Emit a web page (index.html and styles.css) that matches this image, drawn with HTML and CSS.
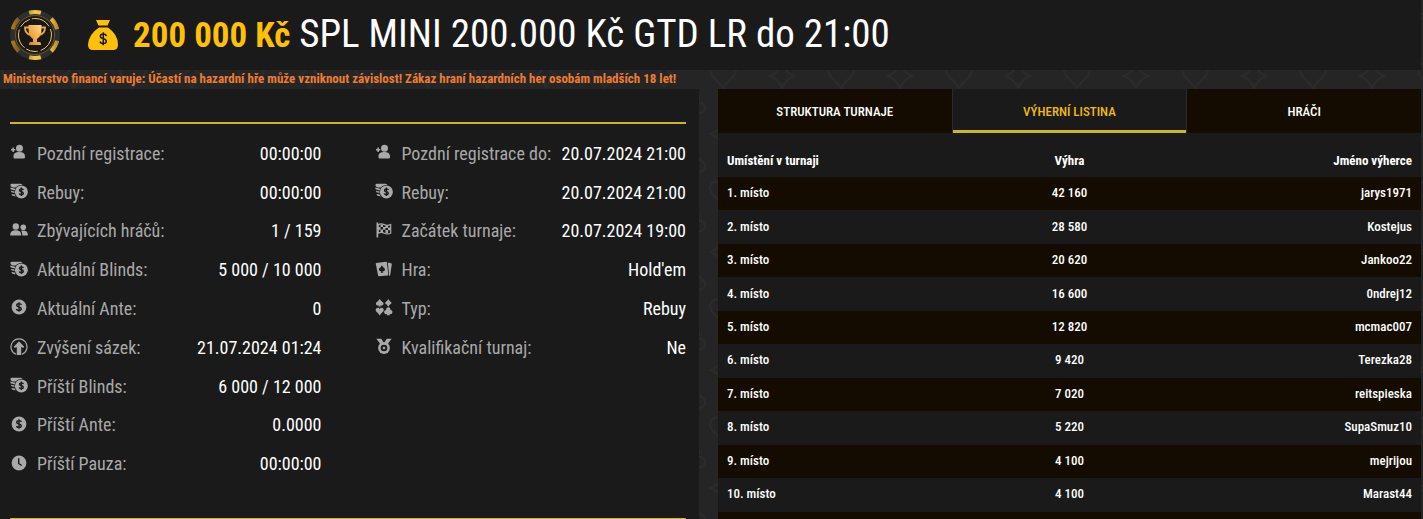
FILE: index.html
```html
<!DOCTYPE html>
<html lang="cs">

<head>
    <meta charset="UTF-8">
    <meta name="viewport" content="width=device-width, initial-scale=1.0">
    <title>SPL MINI 200.000 Kč GTD</title>
    <link rel="stylesheet" href="styles.css">
</head>

<body>
    <svg class="sprite" aria-hidden="true">
        <symbol id="i-user" viewBox="0 0 18 18">
            <circle cx="9.500" cy="4.300" r="3.500"/>
            <path d="M3.500 13.200v-1.200c0-2.500 2.400-3.900 5.900-3.900s5.600 1.400 5.600 3.900v1.200q0 1.300-1.300 1.300H4.800q-1.300 0-1.300-1.300zM2.400 3.600h1.500v1.500h1.400v1.400H3.900V8H2.400V6.500H1V5.100h1.400z"/>
        </symbol>
        <symbol id="i-coins" viewBox="0 0 18 18">
            <path d="M1.800.8h8.400q1.500 0 2.400 1Q8 1.800 5.800 4.600H2.600Q.4 3.800.4 2.100.4.800 1.800.8zM.2 4.600l5 1.200-.6 1.700L.6 6.300zM.8 7.700l3.700.8v1.600L1.500 9.300zM1.500 10.900l3.300.7.8 1.800-3.600-1z"/>
            <circle cx="11.400" cy="8.900" r="6.500"/>
            <path class="cut" d="M13.500 7.100q-.5-1.200-2.100-1.200-1.900 0-1.900 1.400 0 1.100 1.900 1.500t1.900 1.500q0 1.500-1.900 1.500-1.700 0-2.200-1.200M11.400 4.600v8.500"/>
        </symbol>
        <symbol id="i-users" viewBox="0 0 18 18">
            <circle cx="5.800" cy="4.500" r="3.200"/>
            <path d="M.3 13.600v-1.400c0-2.600 2.300-3.900 5.400-3.900s5.400 1.300 5.400 3.900v1.400z"/>
            <circle cx="13.300" cy="5.200" r="2.800"/>
            <path d="M12.200 13.600v-1.500q0-1.900-1.200-3.300 1-.4 2.300-.4c2.700 0 4.500 1.400 4.500 3.900v1.300z"/>
        </symbol>
        <symbol id="i-dollar" viewBox="0 0 18 18">
            <circle cx="9" cy="8" r="7.400"/>
            <path class="cut" d="M11.500 5.900q-.6-1.300-2.500-1.300-2.300 0-2.300 1.700 0 1.200 2.300 1.700t2.300 1.800q0 1.700-2.300 1.700-2.100 0-2.600-1.400M9 3.200v9.600"/>
        </symbol>
        <symbol id="i-raise" viewBox="0 0 18 18">
            <path class="line" d="M6.200 16.300a8 8 0 1 1 5.600 0"/>
            <path d="M9 3.300l5 5.200q.3 1.300-1.200 1.200L11.200 9v8H6.800V9l-1.600.7Q3.700 9.800 4 8.500z"/>
        </symbol>
        <symbol id="i-clock" viewBox="0 0 18 18">
            <circle cx="9" cy="8" r="7.400"/>
            <path class="cut" d="M8.700 3.200V8.500l3 2"/>
        </symbol>
        <symbol id="i-flag" viewBox="0 0 18 18">
            <path d="M1.500.5h1.700v15H1.500z"/>
            <path class="line" d="M3.200 2.600q3-1.500 6 0t6.500 0v8.600q-3.400 1.500-6.500 0t-6 0z"/>
            <path d="M5.500 2.500H8v2.600H5.500zM10.500 3.400H13V6h-2.500zM8 5H10.500v2.800H8zM13 5.600h2.500v2.600H13zM3.300 5h2.200v2.700H3.300zM5.500 7.600H8v2.600H5.500zM10.500 8H13v3h-2.500z"/>
        </symbol>
        <symbol id="i-cards" viewBox="0 0 18 18">
            <path d="M1.300 2L11 .8q.8 0 .9.800l1.400 12q0 .8-.8.900L4 15.300q-.8 0-.9-.8L.8 3q-.2-.8.500-1zM12.800 1.600l3.200.6q.9.200.8 1L15.200 14q-.3 1-1 .9z"/>
            <path class="hole" d="M6.900 4.200q.8 1.900 3 3.500.6 2.200-1.500 2.500l-.8-.3.7 1.800H5.700l.6-1.700-.8.300Q3.600 9.700 3.900 7.700q2.400-1.600 3-3.500z"/>
        </symbol>
        <symbol id="i-suits" viewBox="0 0 18 18">
            <path d="M4.700 0q1 1.800 3.400 3.400 1.200 2.200-1 3-1 .2-1.700-.5L6 7.500H3.400L4 5.900q-.7.700-1.700.5-2.200-.8-1-3Q3.700 1.800 4.700 0zM13.300 0q1.100 2.300 3.500 3.900-2.400 1.600-3.500 3.900-1.100-2.300-3.500-3.900Q12.200 2.300 13.300 0zM4.700 16.500Q3.600 14.400 1.200 12.600q-1.400-2.500.7-3.700 1.800-.6 2.800 1 1-1.600 2.800-1 2.100 1.200.7 3.700-2.400 1.800-3.500 3.900z"/>
            <circle cx="13.300" cy="10.500" r="2.200"/>
            <circle cx="11.300" cy="13.100" r="2.200"/>
            <circle cx="15.300" cy="13.100" r="2.200"/>
            <path d="M12.800 11h1l1 5.300h-3z"/>
        </symbol>
        <symbol id="i-medal" viewBox="0 0 18 18">
            <path d="M1.300.8h5L8.500 4.300l-3 2zM16.700.8h-5L9.500 4.300l3 2z"/>
            <circle cx="9" cy="10" r="5.900"/>
            <circle class="hole" cx="9" cy="10" r="3.300"/>
            <circle cx="9" cy="10" r="1.300"/>
        </symbol>
    </svg>

    <header class="header">
        <svg class="chip" viewBox="0 0 52 52" aria-hidden="true">
            <defs>
                <linearGradient id="gold" x1="0" y1="1" x2="1" y2="0">
                    <stop offset="0" stop-color="#c98a28"/>
                    <stop offset=".5" stop-color="#f3b04c"/>
                    <stop offset="1" stop-color="#ffd98a"/>
                </linearGradient>
                <linearGradient id="rim" x1="0" y1="0" x2="1" y2="0">
                    <stop offset="0" stop-color="#a87a22"/>
                    <stop offset=".15" stop-color="#7d5a1c"/>
                    <stop offset=".5" stop-color="#f0c850"/>
                    <stop offset=".85" stop-color="#e8b83c"/>
                    <stop offset="1" stop-color="#b8862a"/>
                </linearGradient>
            </defs>
            <circle cx="26" cy="26" r="25" fill="#2e2e2e"/>
            <path d="M26 3a23 23 0 0 1 0 46a23 23 0 0 1 0-46" pathLength="60" fill="none" stroke="url(#rim)" stroke-width="4" stroke-dasharray="5 5" stroke-dashoffset="2.500"/>
            <circle cx="26" cy="26" r="19.500" fill="#1d1c1b" stroke="#6b5730"/>
            <circle cx="26" cy="26" r="16.500" fill="#191817" stroke="#e9c86e" stroke-dasharray="20 3 12 2"/>
            <path d="M19.500 16h13v4.500q0 7-4.500 9.500v3h2.500q1.500 0 1.500 3H20q0-3 1.500-3H24v-3q-4.500-2.500-4.500-9.500z" fill="url(#gold)"/>
            <path d="M20 18.500h-4q0 6.500 6 7.500M32 18.500h4q0 6.500-6 7.500" fill="none" stroke="#e8a94a" stroke-width="1.800"/>
        </svg>
        <svg class="bag" viewBox="0 0 32 32" aria-hidden="true">
            <path d="M9 1h14l-2.500 5.500h-9zM12 8.500h9q10 7 10 17 0 5.500-5 5.500H6q-5 0-5-5.500Q2 15 12 8.500z" fill="#ffc107"/>
            <path d="M19.500 17q-.8-2-3.200-2-3 0-3 2.300 0 1.800 3 2.400t3 2.500q0 2.300-3 2.300-2.600 0-3.300-2.100M16.300 13.300v13" fill="none" stroke="#1a1a1a" stroke-width="1.500"/>
        </svg>
        <h1 class="title"><strong class="prize">200 000 Kč</strong> SPL MINI 200.000 Kč GTD LR do 21:00</h1>
    </header>

    <p class="warning">Ministerstvo financí varuje: Účastí na hazardní hře může vzniknout závislost! Zákaz hraní hazardních her osobám mladších 18 let!</p>

    <main class="content">
        <section class="panel info">
            <div class="lists">
                <dl class="list">
                    <div class="item"><svg class="icon"><use href="#i-user"/></svg><dt>Pozdní registrace:</dt><dd>00:00:00</dd></div>
                    <div class="item"><svg class="icon"><use href="#i-coins"/></svg><dt>Rebuy:</dt><dd>00:00:00</dd></div>
                    <div class="item"><svg class="icon"><use href="#i-users"/></svg><dt>Zbývajících hráčů:</dt><dd>1 / 159</dd></div>
                    <div class="item"><svg class="icon"><use href="#i-coins"/></svg><dt>Aktuální Blinds:</dt><dd>5 000 / 10 000</dd></div>
                    <div class="item"><svg class="icon"><use href="#i-dollar"/></svg><dt>Aktuální Ante:</dt><dd>0</dd></div>
                    <div class="item"><svg class="icon"><use href="#i-raise"/></svg><dt>Zvýšení sázek:</dt><dd>21.07.2024 01:24</dd></div>
                    <div class="item"><svg class="icon"><use href="#i-coins"/></svg><dt>Příští Blinds:</dt><dd>6 000 / 12 000</dd></div>
                    <div class="item"><svg class="icon"><use href="#i-dollar"/></svg><dt>Příští Ante:</dt><dd>0.0000</dd></div>
                    <div class="item"><svg class="icon"><use href="#i-clock"/></svg><dt>Příští Pauza:</dt><dd>00:00:00</dd></div>
                </dl>
                <dl class="list">
                    <div class="item"><svg class="icon"><use href="#i-user"/></svg><dt>Pozdní registrace do:</dt><dd>20.07.2024 21:00</dd></div>
                    <div class="item"><svg class="icon"><use href="#i-coins"/></svg><dt>Rebuy:</dt><dd>20.07.2024 21:00</dd></div>
                    <div class="item"><svg class="icon"><use href="#i-flag"/></svg><dt>Začátek turnaje:</dt><dd>20.07.2024 19:00</dd></div>
                    <div class="item"><svg class="icon"><use href="#i-cards"/></svg><dt>Hra:</dt><dd>Hold'em</dd></div>
                    <div class="item"><svg class="icon"><use href="#i-suits"/></svg><dt>Typ:</dt><dd>Rebuy</dd></div>
                    <div class="item"><svg class="icon"><use href="#i-medal"/></svg><dt>Kvalifikační turnaj:</dt><dd>Ne</dd></div>
                </dl>
            </div>
        </section>

        <section class="panel">
            <div class="tabs" role="tablist">
                <button class="tab" type="button" role="tab">STRUKTURA TURNAJE</button>
                <button class="tab active" type="button" role="tab" aria-selected="true">VÝHERNÍ LISTINA</button>
                <button class="tab" type="button" role="tab">HRÁČI</button>
            </div>
            <table class="winners">
                <thead>
                    <tr><th>Umístění v turnaji</th><th>Výhra</th><th>Jméno výherce</th></tr>
                </thead>
                <tbody>
                    <tr><td>1. místo</td><td>42 160</td><td>jarys1971</td></tr>
                    <tr><td>2. místo</td><td>28 580</td><td>Kostejus</td></tr>
                    <tr><td>3. místo</td><td>20 620</td><td>Jankoo22</td></tr>
                    <tr><td>4. místo</td><td>16 600</td><td>0ndrej12</td></tr>
                    <tr><td>5. místo</td><td>12 820</td><td>mcmac007</td></tr>
                    <tr><td>6. místo</td><td>9 420</td><td>Terezka28</td></tr>
                    <tr><td>7. místo</td><td>7 020</td><td>reitspieska</td></tr>
                    <tr><td>8. místo</td><td>5 220</td><td>SupaSmuz10</td></tr>
                    <tr><td>9. místo</td><td>4 100</td><td>mejrijou</td></tr>
                    <tr><td>10. místo</td><td>4 100</td><td>Marast44</td></tr>
                    <tr><td></td><td></td><td></td></tr>
                </tbody>
            </table>
        </section>
    </main>
</body>

</html>
```
FILE: styles.css
```css
* {
    box-sizing: border-box;
}

body {
    margin: 0;
    padding-right: 2px;
    font-family: "Roboto Condensed", "Liberation Sans Narrow", Roboto, sans-serif;
    color: #fff;
    background-color: #252525;
    background-image: url("data:image/svg+xml,%3Csvg xmlns='http://www.w3.org/2000/svg' width='118' height='118' fill='none' stroke='%232b2b2b' stroke-width='2'%3E%3Cpath d='M15 88Q12 83 5 77C-1 70 4 62 10 64Q14 65 15 69Q16 65 20 64C26 62 31 70 25 77Q18 83 15 88z'/%3E%3Cpath d='M74 29Q71 24 64 18C58 11 63 3 69 5Q73 6 74 10Q75 6 79 5C85 3 90 11 84 18Q77 24 74 29zM74 64Q77 72 86 76Q77 80 74 88Q71 80 62 76Q71 72 74 64zM15 4Q18 12 27 16Q18 20 15 28Q12 20 3 16Q12 12 15 4zM104 34Q107 40 113 44C119 50 112 56 105 53L107 58H101L103 53C96 56 89 50 95 44Q101 40 104 34zM45 94Q48 100 54 104C60 110 53 116 46 113L48 117H42L44 113C37 116 30 110 36 104Q42 100 45 94z'/%3E%3Ccircle cx='98' cy='108' r='5'/%3E%3Ccircle cx='110' cy='108' r='5'/%3E%3Ccircle cx='104' cy='98' r='5'/%3E%3Ccircle cx='39' cy='48' r='5'/%3E%3Ccircle cx='51' cy='48' r='5'/%3E%3Ccircle cx='45' cy='38' r='5'/%3E%3C/svg%3E");
}

.sprite {
    display: none;
}

.header {
    display: flex;
    align-items: center;
    height: 70px;
    padding: 0 9px;
    background-color: #1a1a1a;
}

.chip {
    width: 52px;
    height: 52px;
    margin-right: 26px;
}

.bag {
    width: 32px;
    height: 32px;
    margin-right: 14px;
}

.title {
    margin: 0;
    font-size: 39px;
    font-weight: 400;
    line-height: 70px;
    white-space: nowrap;
}

.prize {
    font-size: 35px;
    font-weight: 700;
    color: #ffc107;
}

.warning {
    margin: 0;
    padding: 0 0 2px 3px;
    font-size: 13px;
    font-weight: 700;
    line-height: 17px;
    color: #ed7d31;
}

.content {
    display: grid;
    grid-template-columns: 699fr 703fr;
    gap: 19px;
}

.panel {
    background-color: #1a1a1a;
}

.info {
    padding: 33px 13px 0 10px;
}

.lists {
    display: grid;
    grid-template-columns: 1fr 1fr;
    column-gap: 53px;
    min-height: 398px;
    padding: 10px 0 35px;
    border-top: 2px solid #cdb52b;
    border-bottom: 2px solid #cdb52b;
}

.list {
    display: grid;
    grid-template-rows: repeat(9, 1fr);
    margin: 0;
    font-size: 18px;
}

.item {
    display: flex;
    align-items: center;
    white-space: nowrap;
}

.item dt {
    color: #a9a9a9;
}

.item dd {
    margin: 0 0 0 auto;
}

.icon {
    width: 18px;
    height: 18px;
    margin-right: 9px;
    fill: #a9a9a9;
}

.cut {
    fill: none;
    stroke: #1a1a1a;
    stroke-width: 1.4;
}

.hole {
    fill: #1a1a1a;
}

.line {
    fill: none;
    stroke: #a9a9a9;
    stroke-width: 1.2;
}

.tabs {
    display: grid;
    grid-template-columns: repeat(3, 1fr);
    column-gap: 1px;
    background-color: #2b2b2b;
}

.tab {
    height: 44px;
    padding: 0;
    border: 0;
    font-family: inherit;
    font-size: 13px;
    font-weight: 500;
    color: #fff;
    background-color: #140c00;
    cursor: pointer;
}

.active {
    padding-top: 3px;
    border-bottom: 3px solid #cdb52b;
    color: #f0b90b;
    background-color: #1a1a1a;
}

.winners {
    width: 100%;
    height: 401px;
    margin-top: 11px;
    border-collapse: collapse;
    table-layout: fixed;
    font-size: 13px;
    font-weight: 500;
}

.winners th,
.winners td {
    height: 33px;
    padding: 0 9px;
    text-align: left;
}

.winners td {
    padding-bottom: 2px;
}

.winners th {
    font-weight: 700;
}

.winners th:nth-child(2),
.winners td:nth-child(2) {
    text-align: center;
}

.winners th:nth-child(3),
.winners td:nth-child(3) {
    text-align: right;
}

.winners tbody tr:nth-child(odd) {
    background-color: #140c00;
}
```
